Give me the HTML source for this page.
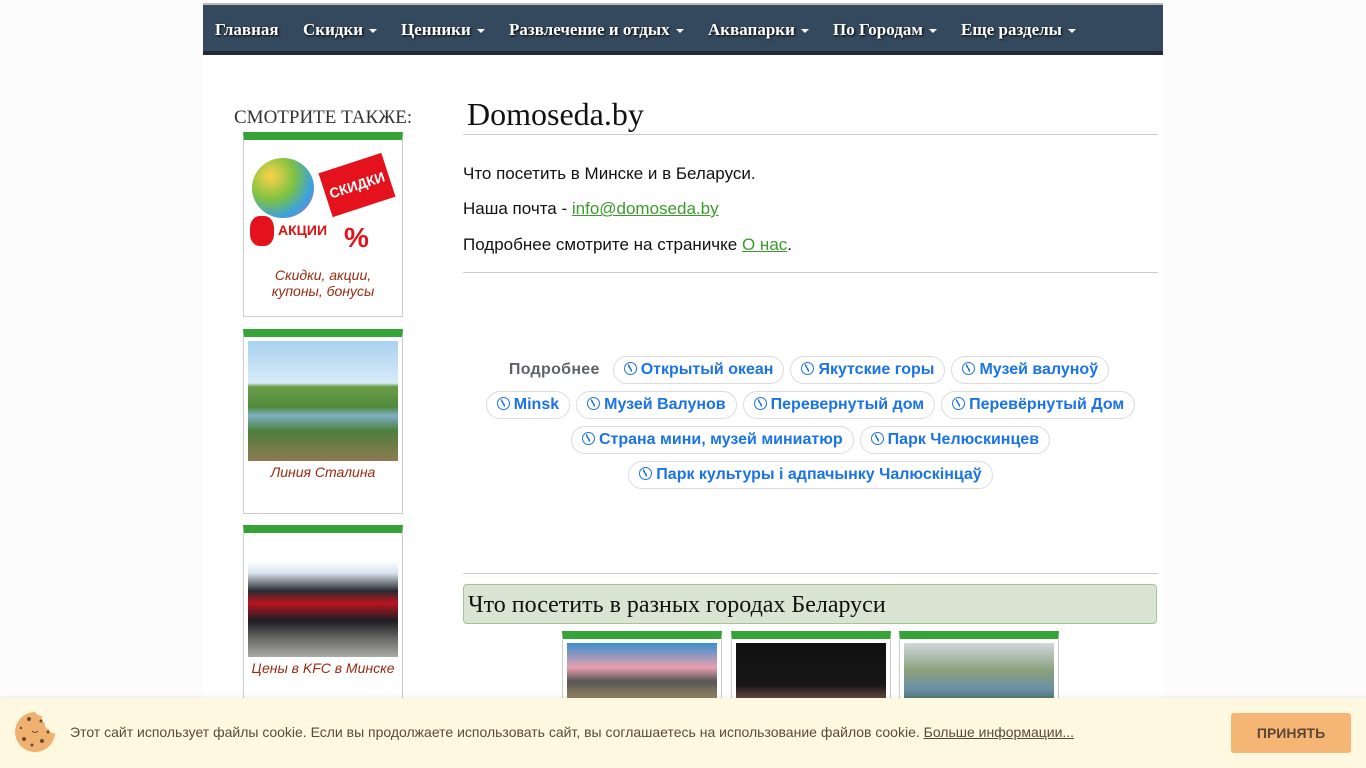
<!DOCTYPE html>
<html><head><meta charset="utf-8"><style>
body{margin:0;background:#fcfcfc;font-family:"Liberation Sans",sans-serif;}
.wrap{position:absolute;left:203px;top:0;width:960px;height:768px;background:#fff;}
.topline{position:absolute;left:0;top:3px;width:960px;height:2px;background:#bbb;}
.nav{position:absolute;left:0;top:5px;width:960px;height:46px;background:#34495e;border-bottom:4px solid #222a33;}
.nav span{position:absolute;top:15px;font-family:"Liberation Serif",serif;font-weight:bold;font-size:17px;color:#fff;text-shadow:1px 1px 2px #000;white-space:nowrap}
.car{display:inline-block;width:0;height:0;border-left:4px solid transparent;border-right:4px solid transparent;border-top:4px solid #fff;vertical-align:middle;margin-left:6px}
.side{position:absolute;left:31px;top:107px;font-family:"Liberation Serif",serif;font-size:19px;color:#333}
.card{position:absolute;left:40px;width:158px;border:1px solid #ccc;border-top:8px solid #35a336;background:#fff}
.card .cap{position:absolute;left:0;width:158px;text-align:center;font-style:italic;font-size:14px;color:#9a2a10;line-height:16px}
h1{position:absolute;left:264px;top:96px;margin:0;font-family:"Liberation Serif",serif;font-weight:normal;font-size:32px;color:#111}
.hr{position:absolute;left:260px;width:695px;height:1px;background:#ccc}
p.t{position:absolute;left:260px;margin:0;font-size:17px;color:#111}
a{color:#3a9a2b}
.chips{position:absolute;left:260px;top:352px;width:695px;text-align:center;line-height:35px;font-size:16px}
.lbl{color:#5f6368;margin-right:10px;font-weight:bold;font-size:16px;letter-spacing:.3px}
.chip{display:inline-block;border:1px solid #dadce0;border-radius:14px;height:26px;line-height:26px;padding:0 10px;color:#1a73e8;margin:0 3px;font-weight:bold;font-size:16px}
.chip i{display:inline-block;width:11px;height:11px;border:1.5px solid #1a73e8;border-radius:50%;vertical-align:-1px;margin-right:4px;position:relative}
.chip i:after{content:"";position:absolute;left:3px;top:1px;width:4px;height:8px;background:linear-gradient(60deg,transparent 40%,#1a73e8 40%,#1a73e8 60%,transparent 60%)}
.sec{position:absolute;left:260px;top:584px;width:688px;height:38px;background:#d9e4d2;border:1px solid #a6c496;border-radius:4px;font-family:"Liberation Serif",serif;font-size:24px;line-height:40px;padding-left:4px;color:#111}
.city{position:absolute;top:631px;width:158px;height:80px;border:1px solid #ccc;border-top:8px solid #35a336;background:#fff}
.city div{position:absolute;left:4px;top:4px;width:150px;height:70px}
.ck{position:fixed;left:0;top:698px;width:1366px;height:70px;background:#fff8e0;box-shadow:0 -1px 4px rgba(0,0,0,.08)}
.ck .txt{position:absolute;left:70px;top:26px;font-size:14px;color:#5a4a3c}
.ck .txt a{color:#5a4a3c}
.btn{position:absolute;left:1231px;top:15px;width:120px;height:40px;background:#f5b675;border-radius:3px;text-align:center;line-height:40px;font-weight:bold;color:#5e4633;font-size:14px}
</style></head><body>
<div class="wrap">
<div class="topline"></div>
<div class="nav">
<span style="left:12px">Главная</span>
<span style="left:100px">Скидки<b class="car"></b></span>
<span style="left:198px">Ценники<b class="car"></b></span>
<span style="left:306px">Развлечение и отдых<b class="car"></b></span>
<span style="left:505px">Аквапарки<b class="car"></b></span>
<span style="left:630px">По Городам<b class="car"></b></span>
<span style="left:758px">Еще разделы<b class="car"></b></span>
</div>
<div class="side">СМОТРИТЕ ТАКЖЕ:</div>
<div class="card" style="top:132px;height:176px">
<div style="position:absolute;left:8px;top:18px;width:62px;height:60px;border-radius:50%;background:radial-gradient(circle at 30% 30%,#ffd24a,#7cc242 40%,#3aa0e0 70%,#e65ca0)"></div>
<div style="position:absolute;left:80px;top:22px;width:66px;height:46px;background:#e3121c;transform:rotate(-18deg);color:#fff;font-weight:bold;font-size:14px;text-align:center;line-height:46px">СКИДКИ</div>
<div style="position:absolute;left:6px;top:76px;width:24px;height:30px;background:#e3121c;border-radius:40%"></div>
<div style="position:absolute;left:34px;top:82px;font-weight:bold;font-size:14px;color:#d11">АКЦИИ</div>
<div style="position:absolute;left:100px;top:82px;font-weight:bold;font-size:28px;color:#e3121c">%</div>
<div class="cap" style="top:127px">Скидки, акции,<br>купоны, бонусы</div>
</div>
<div class="card" style="top:329px;height:176px">
<div style="position:absolute;left:4px;top:4px;width:150px;height:120px;background:linear-gradient(#a9d2ef 0%,#d7ebf7 35%,#6b9d4a 38%,#4f8a3a 55%,#7fb0c4 62%,#4d7e3c 75%,#8f7a52 100%)"></div>
<div class="cap" style="top:127px">Линия Сталина</div>
</div>
<div class="card" style="top:525px;height:200px">
<div style="position:absolute;left:4px;top:4px;width:150px;height:120px;background:linear-gradient(#fff 0%,#fff 20%,#d8e4ef 30%,#2a2a32 45%,#b8141e 55%,#1d1d25 70%,#6a6a66 85%,#aaa 100%)"></div>
<div class="cap" style="top:127px">Цены в KFC в Минске</div>
</div>
<h1>Domoseda.by</h1>
<div class="hr" style="top:134px"></div>
<p class="t" style="top:164px">Что посетить в Минске и в Беларуси.</p>
<p class="t" style="top:199px">Наша почта - <a href="#">info@domoseda.by</a></p>
<p class="t" style="top:235px">Подробнее смотрите на страничке <a href="#">О нас</a>.</p>
<div class="hr" style="top:272px"></div>
<div class="chips">
<span class="lbl">Подробнее</span><span class="chip"><i></i>Открытый океан</span><span class="chip"><i></i>Якутские горы</span><span class="chip"><i></i>Музей валуноў</span><br>
<span class="chip"><i></i>Minsk</span><span class="chip"><i></i>Музей Валунов</span><span class="chip"><i></i>Перевернутый дом</span><span class="chip"><i></i>Перевёрнутый Дом</span><br>
<span class="chip"><i></i>Страна мини, музей миниатюр</span><span class="chip"><i></i>Парк Челюскинцев</span><br>
<span class="chip"><i></i>Парк культуры і адпачынку Чалюскінцаў</span>
</div>
<div class="hr" style="top:573px"></div>
<div class="sec">Что посетить в разных городах Беларуси</div>
<div class="city" style="left:359px"><div style="background:linear-gradient(#3a8ed0,#e8a0b0 35%,#555 55%,#c9b070 100%)"></div></div>
<div class="city" style="left:528px"><div style="background:linear-gradient(#111 0%,#161616 60%,#6a4a40 80%,#302a30)"></div></div>
<div class="city" style="left:696px"><div style="background:linear-gradient(#cfd8dc,#8aa07a 40%,#6a90a8 65%,#2d5a2a)"></div></div>
</div>
<div class="ck">
<svg style="position:absolute;left:14px;top:13px" width="42" height="42" viewBox="0 0 42 42"><path d="M21 1a20 20 0 1 0 20 21c-3 1-6-1-6-4-3 0-5-3-4-6-3-1-4-4-3-7-3 0-6-2-7-4z" fill="#f0b070"/><circle cx="15" cy="8" r="2" fill="#6a4a30"/><circle cx="27" cy="10" r="1.5" fill="#6a4a30"/><circle cx="7" cy="17" r="1.2" fill="#6a4a30"/><circle cx="34" cy="21" r="1.5" fill="#6a4a30"/><circle cx="10" cy="28" r="2" fill="#6a4a30"/><circle cx="28" cy="30" r="2" fill="#6a4a30"/><circle cx="18" cy="34" r="1.5" fill="#6a4a30"/><path d="M18 20q3 3 6 0" stroke="#6a4a30" fill="none"/></svg>
<div class="txt">Этот сайт использует файлы cookie. Если вы продолжаете использовать сайт, вы соглашаетесь на использование файлов cookie. <a href="#">Больше информации...</a></div>
<div class="btn">ПРИНЯТЬ</div>
</div>
</body></html>
